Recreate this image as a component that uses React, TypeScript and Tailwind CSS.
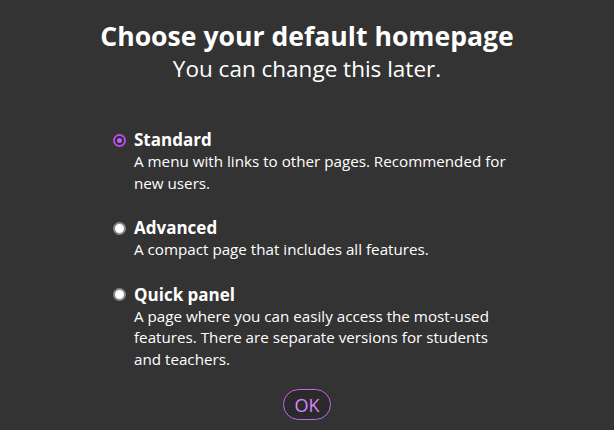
import React from "react";

const options = [
  { title: "Standard", desc: "A menu with links to other pages. Recommended for new users.", selected: true },
  { title: "Advanced", desc: "A compact page that includes all features.", selected: false },
  {
    title: "Quick panel",
    desc: "A page where you can easily access the most-used features. There are separate versions for students and teachers.",
    selected: false,
  },
];

function Radio({ selected }: { selected: boolean }) {
  if (selected) {
    return (
      <span className="flex h-[13px] w-[13px] shrink-0 items-center justify-center rounded-full bg-[#b94ee6]">
        <span className="flex h-[9px] w-[9px] items-center justify-center rounded-full bg-[#2a2a2a]">
          <span className="h-[5px] w-[5px] rounded-full bg-[#c25cf0]" />
        </span>
      </span>
    );
  }
  return <span className="h-[13px] w-[13px] shrink-0 rounded-full border-2 border-[#8a8a8a] bg-white" />;
}

export default function App() {
  return (
    <div
      className="flex h-[430px] w-[614px] flex-col bg-[#333333] text-white"
      style={{ fontFamily: '"Open Sans", "Noto Sans", sans-serif' }}
    >
      <div className="mt-[18px] text-center text-[26.6px] font-bold leading-[36px]">Choose your default homepage</div>
      <div className="text-center text-[22.5px] leading-[30px]">You can change this later.</div>
      <div className="mt-[45px] flex flex-col gap-[23px] pl-[113px]">
        {options.map((o) => (
          <div key={o.title} className="flex flex-col">
            <div className="flex items-center gap-[8px]">
              <Radio selected={o.selected} />
              <span className="text-[17px] font-bold leading-[22px]">{o.title}</span>
            </div>
            <div className="ml-[21px] w-[378px] text-[15.2px] leading-[21.5px]">{o.desc}</div>
          </div>
        ))}
      </div>
      <div className="mt-[19px] flex justify-center">
        <button className="h-[31px] rounded-full border border-[#c565ec] bg-[#2a2a2a] px-[10px] text-[18px] leading-none text-[#de85fb]">
          OK
        </button>
      </div>
    </div>
  );
}
